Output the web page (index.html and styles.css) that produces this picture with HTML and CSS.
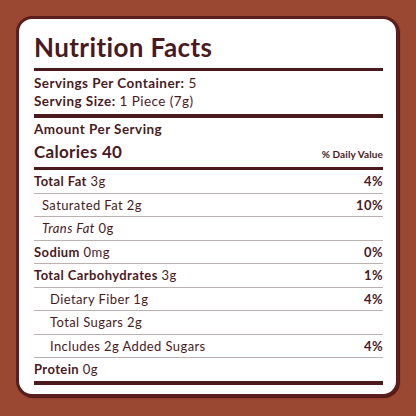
FILE: index.html
```html
<!DOCTYPE html>
<html lang="en">
<head>
    <meta charset="UTF-8">
    <meta name="viewport" content="width=device-width, initial-scale=1.0">
    <title>Nutrition Facts</title>
    <link rel="stylesheet" href="styles.css">
</head>
<body>

    <!-- Label card -->
    <div class="label">
        <h1 class="title">Nutrition Facts</h1>

        <div class="servings">
            <p><b>Servings Per Container:</b> 5</p>
            <p><b>Serving Size:</b> 1 Piece (7g)</p>
        </div>

        <div class="amount">
            <p class="amount-head">Amount Per Serving</p>
            <div class="calories">
                <span class="cal-text">Calories 40</span>
                <span class="dv-head">% Daily Value</span>
            </div>
        </div>

        <!-- Nutrient rows -->
        <div class="rows">
            <div class="row"><span><b>Total Fat</b> 3g</span><b>4%</b></div>
            <div class="row sub"><span>Saturated Fat 2g</span><b>10%</b></div>
            <div class="row sub"><span><i>Trans Fat</i> 0g</span></div>
            <div class="row"><span><b>Sodium</b> 0mg</span><b>0%</b></div>
            <div class="row"><span><b>Total Carbohydrates</b> 3g</span><b>1%</b></div>
            <div class="row sub2"><span>Dietary Fiber 1g</span><b>4%</b></div>
            <div class="row sub2"><span>Total Sugars 2g</span></div>
            <div class="row sub2"><span>Includes 2g Added Sugars</span><b>4%</b></div>
            <div class="row last"><span><b>Protein</b> 0g</span></div>
        </div>
    </div>

</body>
</html>
```

FILE: styles.css
```css
/* Reset */
* { margin: 0; padding: 0; box-sizing: border-box; }

body {
    font-family: Lato, "Open Sans", sans-serif;
    background-color: #9a4832;
    color: #4b1a1d;
    padding: 16px 17px 19px 16px;
    height: 416px;
}

/* Card */
.label {
    background: #fff;
    border: 3px solid #5a1f1c;
    border-radius: 16px;
    box-shadow: 1px 1px 1px #4a1714;
    padding: 0 13px 0 15px;
    height: 100%;
}

.title {
    font-size: 26px;
    font-weight: 700;
    letter-spacing: 0.4px;
    line-height: 30px;
    padding-top: 13px;
    padding-bottom: 6px;
    border-bottom: 3px solid #4b1a1d;
}

.servings {
    font-size: 13.5px;
    letter-spacing: 0.45px;
    line-height: 17.5px;
    padding: 4px 0 4px;
    border-bottom: 4px solid #4b1a1d;
}

.servings b { font-weight: 700; }

.amount {
    padding: 3px 0 2px;
    border-bottom: 3px solid #4b1a1d;
}

.amount-head {
    font-size: 13.5px;
    font-weight: 700;
    letter-spacing: 0.45px;
    line-height: 17px;
}

.calories {
    display: flex;
    justify-content: space-between;
    align-items: baseline;
    margin-top: 3px;
    line-height: 22px;
}

.cal-text {
    font-size: 17px;
    font-weight: 700;
    letter-spacing: 0.3px;
}

.dv-head {
    font-size: 10px;
    font-weight: 700;
    letter-spacing: 0.1px;
}

/* Rows */
.row {
    display: flex;
    justify-content: space-between;
    font-size: 13px;
    letter-spacing: 0.4px;
    line-height: 22.5px;
    border-bottom: 1px solid #bcb0b0;
}

.row b { font-weight: 700; }

.row.sub { padding-left: 8px; }

.row.sub2 { padding-left: 16px; }

.row.last {
    border-bottom: 4px solid #4b1a1d;
}
```
